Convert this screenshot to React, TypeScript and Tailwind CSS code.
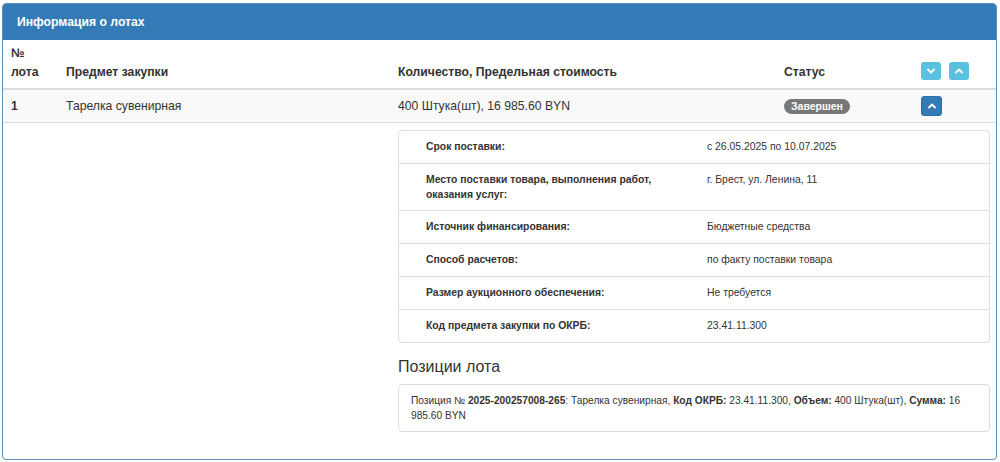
import React from "react";

const Chevron = ({ up }: { up?: boolean }) => (
  <svg width="10" height="10" viewBox="0 0 10 10" fill="none" stroke="white" strokeWidth="1.8" strokeLinecap="round" strokeLinejoin="round">
    {up ? <path d="M2 6.5 L5 3.5 L8 6.5" /> : <path d="M2 3.5 L5 6.5 L8 3.5" />}
  </svg>
);

const details: [string, string][] = [
  ["Срок поставки:", "с 26.05.2025 по 10.07.2025"],
  ["Место поставки товара, выполнения работ, оказания услуг:", "г. Брест, ул. Ленина, 11"],
  ["Источник финансирования:", "Бюджетные средства"],
  ["Способ расчетов:", "по факту поставки товара"],
  ["Размер аукционного обеспечения:", "Не требуется"],
  ["Код предмета закупки по ОКРБ:", "23.41.11.300"],
];

export default function App() {
  return (
    <div className="w-[1000px] h-[462px] bg-white pt-[3px] px-[2px] text-[#333]" style={{ fontFamily: '"Liberation Sans", Arial, sans-serif' }}>
      <div className="w-[995px] h-[457px] border border-[#5d8fbb] rounded-[4px] overflow-hidden flex flex-col">
        <div className="h-[36px] shrink-0 bg-[#337ab7] text-white text-[12.2px] font-bold flex items-center pl-[14px]">
          Информация о лотах
        </div>
        <table className="w-full table-fixed border-collapse text-[12.2px]">
          <colgroup>
            <col className="w-[55px]" />
            <col className="w-[332px]" />
            <col className="w-[386px]" />
            <col className="w-[137px]" />
            <col />
          </colgroup>
          <thead>
            <tr className="border-b-2 border-[#ddd] h-[49px]">
              <th className="text-left font-bold px-2 align-bottom pb-[6px] leading-[19px]">№<br />лота</th>
              <th className="text-left font-bold px-2 align-bottom pb-[6px] leading-[19px]">Предмет закупки</th>
              <th className="text-left font-bold px-2 align-bottom pb-[6px] leading-[19px]">Количество, Предельная стоимость</th>
              <th className="text-left font-bold px-2 align-bottom pb-[6px] leading-[19px]">Статус</th>
              <th className="text-left px-2 align-bottom pb-[8px]">
                <div className="flex gap-[8px]">
                  <span className="w-[20px] h-[18px] rounded-[3px] bg-[#5bc0de] flex items-center justify-center"><Chevron /></span>
                  <span className="w-[20px] h-[18px] rounded-[3px] bg-[#5bc0de] flex items-center justify-center"><Chevron up /></span>
                </div>
              </th>
            </tr>
          </thead>
          <tbody>
            <tr className="bg-[#f9f9f9] border-b border-[#ddd] h-[33px]">
              <td className="px-2 font-bold">1</td>
              <td className="px-2">Тарелка сувенирная</td>
              <td className="px-2">400 Штука(шт), 16 985.60 BYN</td>
              <td className="px-2">
                <span className="inline-flex items-center h-[15px] px-[7px] rounded-full bg-[#777] text-white text-[10.5px] font-bold">Завершен</span>
              </td>
              <td className="px-2">
                <span className="w-[21px] h-[20px] rounded-[3px] bg-[#337ab7] border border-[#2e6da4] flex items-center justify-center"><Chevron up /></span>
              </td>
            </tr>
            <tr>
              <td colSpan={2}></td>
              <td colSpan={3} className="pt-[7px] pl-2 pr-[6px] align-top">
                <div className="border border-[#ddd] rounded-[4px] text-[10.4px]">
                  {details.map(([k, v], i) => (
                    <div key={i} className={`flex leading-[16px] ${i > 0 ? "border-t border-[#ddd]" : ""}`}>
                      <div className={`w-[300px] pl-[27px] pr-2 font-bold ${i === 1 ? "pt-2 pb-[7px] leading-[15.5px]" : "py-2"}`}>{k}</div>
                      <div className="flex-1 px-2 py-2">{v}</div>
                    </div>
                  ))}
                </div>
                <div className="text-[16px] leading-[20px] mt-[14px] mb-[7px]">Позиции лота</div>
                <div className="border border-[#ddd] rounded-[4px] text-[10.2px] leading-[15px] pl-[12px] pr-[12px] py-[8px]">
                  Позиция № <b>2025-200257008-265</b>: Тарелка сувенирная, <b>Код ОКРБ:</b> 23.41.11.300, <b>Объем:</b> 400 Штука(шт), <b>Сумма:</b> 16 985.60 BYN
                </div>
              </td>
            </tr>
          </tbody>
        </table>
      </div>
    </div>
  );
}
